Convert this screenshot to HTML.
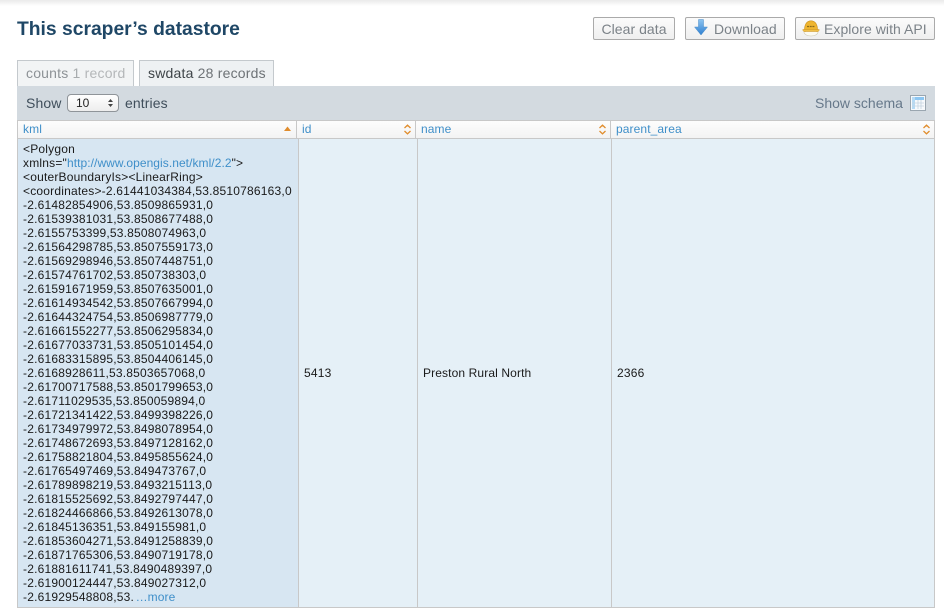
<!DOCTYPE html>
<html><head><meta charset="utf-8">
<style>
html,body{margin:0;padding:0;background:#fff;width:944px;height:608px;overflow:hidden}
body{position:relative;font-family:"Liberation Sans",sans-serif}
.a{position:absolute;white-space:nowrap}
.btn{position:absolute;top:17px;height:21px;box-sizing:content-box;border:1px solid #aaa;border-radius:2px;background:linear-gradient(#fbfbfb,#efefef);color:#7b8288;font-size:14px;line-height:23px;text-align:center;white-space:nowrap;letter-spacing:.05px}
.tab{position:absolute;top:60px;height:25px;border:1px solid #c4c9cd;border-bottom:0;font-size:14px;line-height:24px;white-space:nowrap;box-sizing:content-box;letter-spacing:.2px}
.th{position:absolute;top:121px;height:17px;background:linear-gradient(#fdfdfd,#f3f3f3);color:#3f8fc9;font-size:12px;line-height:17px;box-sizing:border-box;padding-left:5px;letter-spacing:.1px}
.td{position:absolute;top:139px;height:468px;background:#e5f0f7;font-size:12px;color:#1a1a1a}
svg{position:absolute}
</style></head><body>
<div class="a" style="left:0;top:0;width:944px;height:6px;background:linear-gradient(#eaeaea,#fff)"></div>
<div class="a" style="left:17px;top:18px;font-size:19.300px;line-height:24px;font-weight:bold;color:#1f4766">This scraper’s datastore</div>

<div class="btn" style="left:593px;width:80px">Clear data</div>
<div class="btn" style="left:685px;width:98px"><span style="position:absolute;left:28px">Download</span>
<svg style="left:8px;top:1px" width="14" height="17" viewBox="0 0 14 17"><defs><linearGradient id="g" x1="0" y1="0" x2="0" y2="1"><stop offset="0" stop-color="#8cc4f0"/><stop offset="1" stop-color="#2f7fd0"/></linearGradient></defs><path d="M4.500 .5H9.500V8H13.500L7 16L.5 8H4.500Z" fill="url(#g)" stroke="#4a8cc8" stroke-width=".5"/></svg></div>
<div class="btn" style="left:795px;width:138px"><span style="position:absolute;left:28px">Explore with API</span>
<svg style="left:6px;top:2px" width="18" height="17" viewBox="0 0 18 17"><ellipse cx="9" cy="12" rx="7" ry="4" fill="#fbfaf2" stroke="#c9c7b4" stroke-width=".6"/><path d="M2.500 10C2.500 3.500 5.500 .8 9 .8S15.500 3.500 15.500 10Z" fill="#efb52e" stroke="#c98f1e" stroke-width=".6"/><path d="M.8 9.500H17.200C17.200 11.500 15.500 12 14 11.500H4C2.500 12 .8 11.500 .8 9.500Z" fill="#f0c048" stroke="#c98f1e" stroke-width=".5"/><path d="M5 6.500H13" stroke="#8a6a1a" stroke-width="1.200" stroke-dasharray="2 .7"/></svg></div>

<div class="tab" style="left:17px;width:115px;background:#f2f4f5"><span style="margin-left:8px;color:#8d9296">counts</span> <span style="color:#a7abad">1</span> <span style="color:#b4b7b9">record</span></div>
<div class="tab" style="left:139px;width:133px;background:#eef1f3"><span style="margin-left:8px;color:#3e4448">swdata</span> <span style="color:#6d7276">28 records</span></div>

<div class="a" style="left:17px;top:86px;width:918px;height:34px;background:#d3dae0"></div>
<div class="a" style="left:26px;top:94px;font-size:14px;line-height:18px;color:#3f4e5b;letter-spacing:.1px">Show</div>
<div class="a" style="left:67px;top:94px;width:50px;height:16px;border:1px solid #8f9499;border-radius:4px;background:linear-gradient(#fff,#ededed);font-size:12px;line-height:17px;color:#222;text-indent:8px">10
<svg style="left:39px;top:3px" width="7" height="10" viewBox="0 0 7 10"><path d="M3.500 1L6 4H1ZM3.500 9L1 6H6Z" fill="#444"/></svg></div>
<div class="a" style="left:125px;top:94px;font-size:14px;line-height:18px;color:#3f4e5b;letter-spacing:.1px">entries</div>
<div class="a" style="left:815px;top:94px;font-size:14px;line-height:18px;color:#66788a">Show schema</div>
<svg style="left:910px;top:95px" width="16" height="16" viewBox="0 0 16 16"><rect x=".5" y=".5" width="15" height="15" fill="#f6f9fc" stroke="#9aa6b0"/><rect x="2" y="2" width="12" height="3" fill="#8cc6f2"/><rect x="2" y="2" width="3" height="12" fill="#b5daf5"/><path d="M2 8H14M2 11H14M8 5V14M11 5V14" stroke="#c5d3df" stroke-width=".8"/></svg>

<div class="a" style="left:17px;top:120px;width:918px;height:488px;background:#c8c8c8"></div>

<div class="th" style="left:18px;width:278px">kml</div>
<div class="th" style="left:297px;width:118px">id</div>
<div class="th" style="left:416px;width:194px">name</div>
<div class="th" style="left:611px;width:323px">parent_area</div>

<svg style="left:283px;top:126px" width="9" height="6" viewBox="0 0 9 6"><path d="M4.500 .5L8 5H1Z" fill="#e08c2c"/></svg>
<svg style="left:403px;top:124px" width="9" height="11" viewBox="0 0 9 11"><path d="M1.500 4L4.500 1.200L7.500 4M1.500 7L4.500 9.800L7.500 7" fill="none" stroke="#e08c2c" stroke-width="1.300"/></svg>
<svg style="left:598px;top:124px" width="9" height="11" viewBox="0 0 9 11"><path d="M1.500 4L4.500 1.200L7.500 4M1.500 7L4.500 9.800L7.500 7" fill="none" stroke="#e08c2c" stroke-width="1.300"/></svg>
<svg style="left:922px;top:124px" width="9" height="11" viewBox="0 0 9 11"><path d="M1.500 4L4.500 1.200L7.500 4M1.500 7L4.500 9.800L7.500 7" fill="none" stroke="#e08c2c" stroke-width="1.300"/></svg>

<div class="td" style="left:18px;width:280px;background:#d7e6f2"></div>
<div class="td" style="left:299px;width:118px"></div>
<div class="td" style="left:418px;width:193px"></div>
<div class="td" style="left:612px;width:322px"></div>

<div class="a" style="left:23px;top:142px;font-size:12px;line-height:14px;color:#1a1a1a;white-space:pre;letter-spacing:.2px">&lt;Polygon
xmlns="<span style="color:#3f8fc9;letter-spacing:.06px">http://www.opengis.net/kml/2.2</span>"&gt;
&lt;outerBoundaryIs&gt;&lt;LinearRing&gt;
&lt;coordinates&gt;-2.61441034384,53.8510786163,0
-2.61482854906,53.8509865931,0
-2.61539381031,53.8508677488,0
-2.6155753399,53.8508074963,0
-2.61564298785,53.8507559173,0
-2.61569298946,53.8507448751,0
-2.61574761702,53.850738303,0
-2.61591671959,53.8507635001,0
-2.61614934542,53.8507667994,0
-2.61644324754,53.8506987779,0
-2.61661552277,53.8506295834,0
-2.61677033731,53.8505101454,0
-2.61683315895,53.8504406145,0
-2.6168928611,53.8503657068,0
-2.61700717588,53.8501799653,0
-2.61711029535,53.850059894,0
-2.61721341422,53.8499398226,0
-2.61734979972,53.8498078954,0
-2.61748672693,53.8497128162,0
-2.61758821804,53.8495855624,0
-2.61765497469,53.849473767,0
-2.61789898219,53.8493215113,0
-2.61815525692,53.8492797447,0
-2.61824466866,53.8492613078,0
-2.61845136351,53.849155981,0
-2.61853604271,53.8491258839,0
-2.61871765306,53.8490719178,0
-2.61881611741,53.8490489397,0
-2.61900124447,53.849027312,0
-2.61929548808,53. <span style="color:#3f8fc9;margin-left:-2px;letter-spacing:.1px">…more</span></div>

<div class="a" style="left:304px;top:366px;font-size:12px;line-height:14px;color:#1a1a1a;letter-spacing:.2px">5413</div>
<div class="a" style="left:423px;top:366px;font-size:12px;line-height:14px;color:#1a1a1a;letter-spacing:.12px">Preston Rural North</div>
<div class="a" style="left:617px;top:366px;font-size:12px;line-height:14px;color:#1a1a1a;letter-spacing:.2px">2366</div>
</body></html>
